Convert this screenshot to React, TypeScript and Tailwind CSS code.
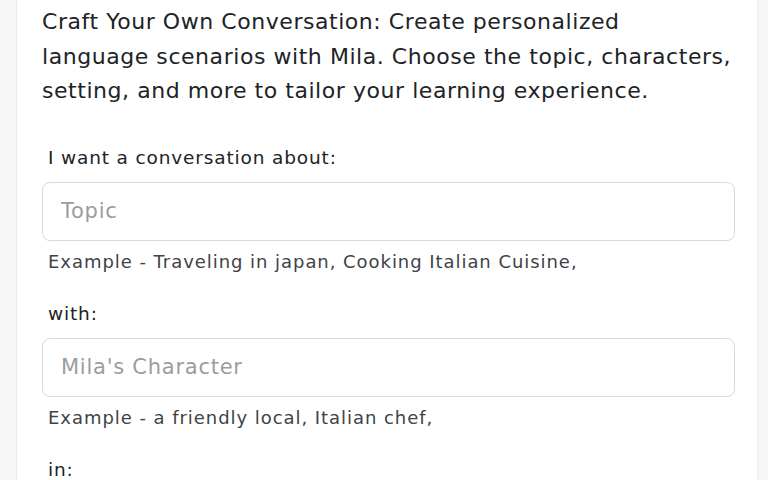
export default function App() {
  const font = { fontFamily: '"DejaVu Sans", "Noto Sans", sans-serif' };
  const label = "block pl-[6px] text-[18.5px] leading-[26px] tracking-[0.85px] text-[#202326]";
  const hint = "pl-[6px] text-[18px] leading-[26px] tracking-[0.95px] text-[#404346]";
  const field =
    "h-[59px] w-full rounded-lg border border-[#d9d9dc] bg-white px-[18px] text-[21px] tracking-[0.75px] text-[#333] outline-none placeholder:text-[#9a9da0]";
  return (
    <div className="flex h-[480px] w-full overflow-hidden bg-[#f6f6f7] pl-4 pr-[10px]" style={font}>
      <div className="flex-1 border-x border-[#ececee] bg-white pl-[25px] pr-[22px] pt-[5px]">
        <h1 className="whitespace-nowrap text-[22px] leading-[34.5px] tracking-[0.55px] text-[#202326]">
          Craft Your Own Conversation: Create personalized
          <br />
          language scenarios with Mila. Choose the topic, characters,
          <br />
          setting, and more to tailor your learning experience.
        </h1>

        <div className="mt-[36px]">
          <label className={label}>I want a conversation about:</label>
          <input placeholder="Topic" className={`mt-[11px] ${field}`} />
          <p className={`mt-[8px] ${hint}`}>Example - Traveling in japan, Cooking Italian Cuisine,</p>
        </div>

        <div className="mt-[26px]">
          <label className={label}>with:</label>
          <input placeholder="Mila's Character" className={`mt-[11px] ${field}`} />
          <p className={`mt-[8px] ${hint}`}>Example - a friendly local, Italian chef,</p>
        </div>

        <div className="mt-[26px]">
          <label className={label}>in:</label>
        </div>
      </div>
    </div>
  );
}
